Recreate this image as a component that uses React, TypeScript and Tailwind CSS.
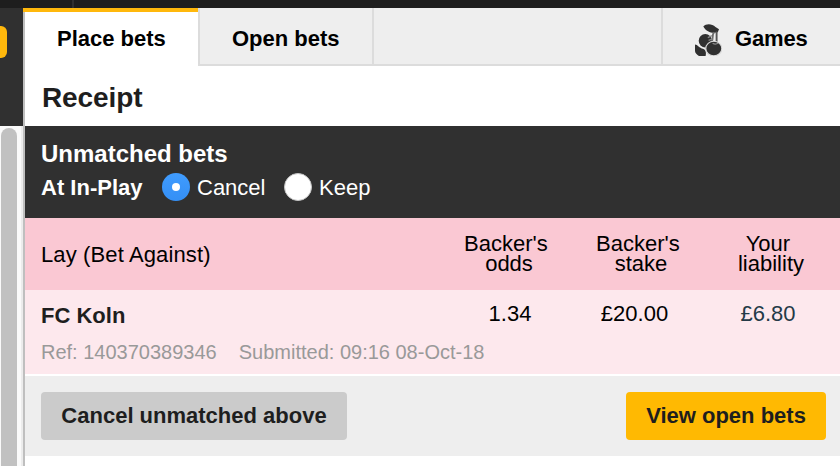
import React from "react";

function CherriesIcon() {
  return (
    <svg width="27" height="32" viewBox="0 0 27 32" className="block shrink-0 blur-[0.4px]" aria-hidden="true">
      <path d="M8.3 2.6 C11 -0.6 17 -0.4 20.5 3 L24 5.2 L22.8 8.2 L19.5 8.8 C15.5 9 11 7.6 8.3 2.6 Z" fill="#303030" />
      <path d="M21.6 7.5 V19" stroke="#555" strokeWidth="1.9" fill="none" />
      <path d="M0 20.6 C2.5 20.6 4.5 24.3 8 24.8 C10.8 25.6 11.5 29 10.6 32 H4 C2 30.5 0 29.2 0 27 Z" fill="#303030" />
      <ellipse cx="10.3" cy="16.8" rx="6.6" ry="6.8" fill="#303030" />
      <path d="M19.2 8.5 C16.5 10 18.8 14.5 16.6 18.5" stroke="#6a6a6a" strokeWidth="1.8" fill="none" />
      <path d="M12.8 13.6 L17 11.6 M13.6 16.4 L17.5 14.8" stroke="#8a8a8a" strokeWidth="1.3" fill="none" />
      <ellipse cx="18.8" cy="24.6" rx="8" ry="7.3" fill="#303030" stroke="#d8d8d8" strokeWidth="1.1" />
      <path d="M17.6 19.2 Q20.4 20.8 23 19.3" stroke="#8a8a8a" strokeWidth="1.2" fill="none" />
    </svg>
  );
}

function LeftRail() {
  return (
    <div className="flex w-[23px] shrink-0 flex-col">
      <div className="h-[118px] bg-[#303030] pt-[18px]">
        <div className="h-8 w-[7px] rounded-r-[6px] bg-[#ffb80c]" />
      </div>
      <div className="flex-1 border-r-2 border-[#ececec] bg-[#fafafa] pl-px pt-0.5">
        <div className="h-full w-4 rounded-t-full bg-[#c1c1c1]" />
      </div>
    </div>
  );
}

function Tabs() {
  return (
    <div className="flex h-[58px] text-[22px] font-bold leading-[26px] text-black">
      <div className="-ml-0.5 w-[175px] shrink-0">
        <div className="h-1 bg-[#ffb80c]" />
        <div className="h-[54px] border-l-2 border-[#bfbfbf] bg-white pl-8 pt-[14px]">Place bets</div>
      </div>
      <div className="w-[176px] shrink-0 border-x-2 border-b-2 border-[#dcdcdc] bg-[#eee] pl-8 pt-[18px]">Open bets</div>
      <div className="flex-1 border-b-2 border-[#dcdcdc] bg-[#eee]" />
      <div className="flex w-[179px] shrink-0 items-start border-b-2 border-l-2 border-[#dcdcdc] bg-[#eee] pl-8">
        <div className="pt-4"><CherriesIcon /></div>
        <span className="pl-[13px] pt-[18px] tracking-[-0.15px]">Games</span>
      </div>
    </div>
  );
}

export default function App() {
  return (
    <div className="flex h-[466px] w-[840px] flex-col overflow-hidden bg-white font-['Liberation_Sans',Arial,sans-serif]">
      <div className="h-2 shrink-0 bg-[#1e1e1e] pl-[72px]">
        <div className="h-2 w-0.5 bg-[#303030]" />
      </div>
      <div className="flex min-h-0 flex-1">
        <LeftRail />
        <main className="min-w-0 flex-1 border-l-2 border-[#bfbfbf]">
          <Tabs />
          <h1 className="h-[60px] bg-white pl-[17px] pt-4 text-[28px] font-bold leading-8 tracking-[-0.1px] text-[#1e1e1e]">Receipt</h1>
          <section className="h-[92px] bg-[#303030] pl-4 pt-[14px] text-white">
            <h2 className="text-[24px] font-bold leading-7">Unmatched bets</h2>
            <div className="mt-[5px] flex h-7 items-center text-[22px] leading-7">
              <span className="w-[121px] pt-px font-bold">At In-Play</span>
              <span className="flex size-7 items-center justify-center rounded-full bg-gradient-to-b from-[#409cff] to-[#348ff5]">
                <span className="size-2 rounded-full bg-white" />
              </span>
              <span className="ml-px w-[87px] pl-1.5 pt-px">Cancel</span>
              <span className="ml-[6px] size-7 rounded-full border border-[#c5c5c5] bg-white" />
              <span className="pl-[7px] pt-px">Keep</span>
            </div>
          </section>
          <section className="flex h-[72px] items-center bg-[#fac8d3] text-[22px] leading-5 text-black">
            <div className="w-[418px] pl-4 pt-0.5 tracking-[0.12px]">Lay (Bet Against)</div>
            <div className="w-[132px] text-center">Backer's&nbsp;<br />odds</div>
            <div className="w-[132px] text-center">Backer's&nbsp;<br />stake</div>
            <div className="w-[128px] text-center">Your&nbsp;<br />liability</div>
          </section>
          <section className="h-[84px] bg-[#fde8ed] pt-3">
            <div className="flex text-[22px] leading-6 text-black">
              <div className="w-[418px] pl-4 pt-0.5 font-bold text-[#1e1e1e]">FC Koln</div>
              <div className="w-[132px] pl-0.5 text-center">1.34</div>
              <div className="w-[119px] text-center">£20.00</div>
              <div className="w-[146px] pl-0.5 text-center text-[#243a47]">£6.80</div>
            </div>
            <div className="flex gap-[22px] pl-4 pt-3 text-[20px] leading-6 text-[#999]">
              <span>Ref: 140370389346</span>
              <span>Submitted: 09:16 08-Oct-18</span>
            </div>
          </section>
          <footer className="mt-0.5 flex h-20 items-center justify-between bg-[#eee] pl-4 pr-[14px] text-[22px] font-bold text-[#1e1e1e]">
            <button className="h-12 w-[306px] rounded bg-[#cbcbcb] pb-px">Cancel unmatched above</button>
            <button className="h-12 w-[200px] rounded bg-[#ffb902] pb-px">View open bets</button>
          </footer>
        </main>
      </div>
    </div>
  );
}
